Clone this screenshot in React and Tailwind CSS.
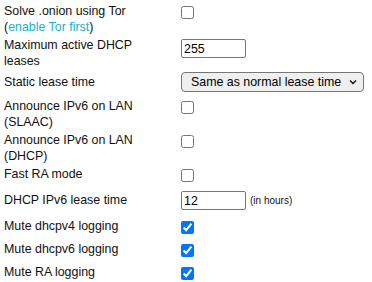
import { useState } from 'react';

function Row({ label, h, children }) {
  return (
    <div className={`flex items-start ${h}`}>
      <div className="w-[177px] pr-[27px] leading-[16px]">{label}</div>
      <div className="flex items-center">{children}</div>
    </div>
  );
}

function Check({ checked }) {
  const [on, setOn] = useState(checked);
  return (
    <input
      type="checkbox"
      checked={on}
      onChange={e => setOn(e.target.checked)}
      className="mt-[3px] h-[13px] w-[13px]"
    />
  );
}

function TextBox({ value }) {
  const [v, setV] = useState(value);
  return (
    <input
      type="text"
      value={v}
      onChange={e => setV(e.target.value)}
      className="mt-[2px] h-[19px] w-[65px] rounded-[2px] border border-[#767676] bg-white px-[2px] text-[12.4px] text-black outline-none"
    />
  );
}

export default function App() {
  return (
    <div className="bg-white pl-[4px] pt-[3px] text-[12.4px] text-[#111] font-['Liberation_Sans',Arial,sans-serif]">
      <Row h="h-[34px]" label={<>Solve .onion using Tor<br />(<a className="text-[#1bb0c8]">enable Tor first</a>)</>}>
        <Check checked={false} />
      </Row>
      <Row h="h-[33px]" label="Maximum active DHCP leases">
        <TextBox value="255" />
      </Row>
      <Row h="h-[28px]" label={<span className="relative top-[4px]">Static lease time</span>}>
        <div className="relative mt-[2px]">
          <select className="h-[20px] w-[183px] appearance-none rounded-[4px] border border-[#767676] bg-[#efefef] pl-[9px] text-[12.4px] text-black outline-none">
            <option>Same as normal lease time</option>
          </select>
          <svg className="pointer-events-none absolute right-[7px] top-[7px]" width="8" height="6" viewBox="0 0 8 6">
            <path d="M1 1.5 L4 4.5 L7 1.5" fill="none" stroke="#111" strokeWidth="1.4" />
          </svg>
        </div>
      </Row>
      <Row h="h-[34px]" label="Announce IPv6 on LAN (SLAAC)">
        <Check checked={false} />
      </Row>
      <Row h="h-[34px]" label="Announce IPv6 on LAN (DHCP)">
        <Check checked={false} />
      </Row>
      <Row h="h-[23px]" label="Fast RA mode">
        <Check checked={false} />
      </Row>
      <Row h="h-[29px]" label={<span className="relative top-[3px]">DHCP IPv6 lease time</span>}>
        <TextBox value="12" />
        <span className="ml-[4px] mt-[2px] text-[10px]">(in hours)</span>
      </Row>
      <Row h="h-[23px]" label="Mute dhcpv4 logging">
        <Check checked={true} />
      </Row>
      <Row h="h-[23px]" label="Mute dhcpv6 logging">
        <Check checked={true} />
      </Row>
      <Row h="h-[23px]" label="Mute RA logging">
        <Check checked={true} />
      </Row>
    </div>
  );
}
